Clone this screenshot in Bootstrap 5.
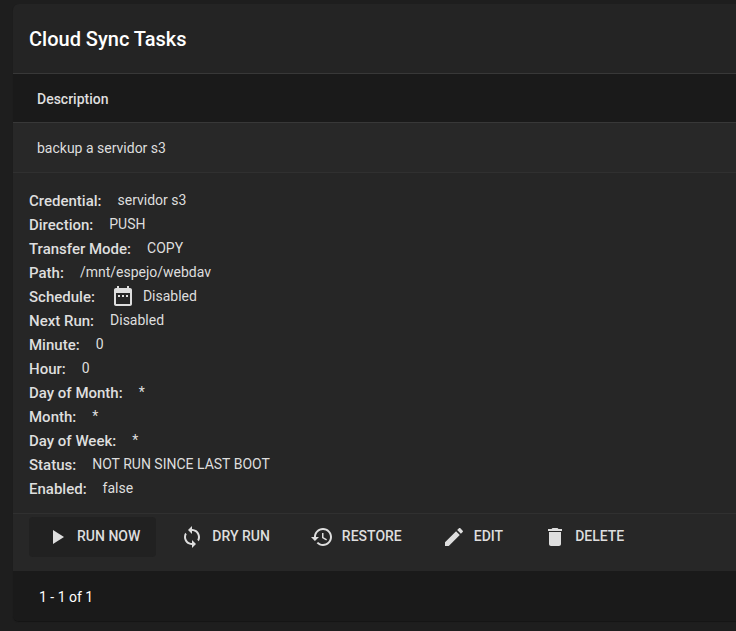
<!DOCTYPE html>
<html lang="en" data-bs-theme="dark">
<head>
<meta charset="utf-8">
<meta name="viewport" content="width=device-width, initial-scale=1">
<title>Cloud Sync Tasks</title>
<link href="https://cdn.jsdelivr.net/npm/bootstrap@5.3.0/dist/css/bootstrap.min.css" rel="stylesheet">
<style>
body { background: #1e1e1e; color: #dedede; font: 400 14px/24px Roboto, "Liberation Sans", sans-serif; }
.task-card { margin: 4px 0 8px 13px; background: #242424; border-radius: 6px 0 0 6px; box-shadow: 0 1px 1px #141414; }
.task-title { color: #fff; font-size: 20px; font-weight: 500; line-height: 24px; padding: 23px 16px 22px; }
.task-table th, .task-table .task-name { border: 0 solid #383838; border-width: 1px 0; padding: 13px 24px 11px; }
.task-table th { background: #1a1a1a; font-weight: 500; }
.task-table .task-name { background: #282828; border-bottom-color: #303030; padding: 13px 24px 12px; }
.task-table .task-detail { background: #262626; padding: 0; }
.facts { padding: 16px 16px 12px; }
.facts dt { font-size: 15px; font-weight: 500; line-height: 24px; }
.facts dd { line-height: 22px; }
.task-actions { border-top: 1px solid #303030; background: #272727; padding: 3px 16px 14px; }
.act { color: #dedede; font-size: 14px; font-weight: 500; line-height: 22px; padding: 8px 16px; border: 0; border-radius: 4px; }
.act:hover, .act.is-focused { background: #212121; color: #dedede; }
.glyph { width: 24px; height: 24px; fill: currentColor; flex: none; }
.task-pager { background: #1a1a1a; color: #fff; padding: 14px 26px 12px; border-radius: 0 0 0 6px; }
</style>
<script defer src="https://cdn.jsdelivr.net/npm/bootstrap@5.3.0/dist/js/bootstrap.bundle.min.js"></script>
</head>
<body>
<main class="task-card">
  <h1 class="task-title m-0">Cloud Sync Tasks</h1>
  <table class="task-table w-100">
    <thead><tr><th scope="col">Description</th></tr></thead>
    <tbody>
      <tr><td class="task-name">backup a servidor s3</td></tr>
      <tr><td class="task-detail">
        <dl class="facts m-0">
          <div class="d-flex gap-3"><dt>Credential:</dt><dd class="m-0">servidor s3</dd></div>
          <div class="d-flex gap-3"><dt>Direction:</dt><dd class="m-0">PUSH</dd></div>
          <div class="d-flex gap-3"><dt>Transfer Mode:</dt><dd class="m-0">COPY</dd></div>
          <div class="d-flex gap-3"><dt>Path:</dt><dd class="m-0">/mnt/espejo/webdav</dd></div>
          <div class="d-flex gap-3"><dt>Schedule:</dt><dd class="m-0 d-flex gap-2"><svg class="glyph" viewBox="0 1 24 24" aria-hidden="true"><path d="M9 11H7v2h2v-2zm4 0h-2v2h2v-2zm4 0h-2v2h2v-2zm2-7h-1V2h-2v2H8V2H6v2H5c-1.11 0-1.99.9-1.99 2L3 20c0 1.1.89 2 2 2h14c1.1 0 2-.9 2-2V6c0-1.1-.9-2-2-2zm0 16H5V9h14v11z"/></svg>Disabled</dd></div>
          <div class="d-flex gap-3"><dt>Next Run:</dt><dd class="m-0">Disabled</dd></div>
          <div class="d-flex gap-3"><dt>Minute:</dt><dd class="m-0">0</dd></div>
          <div class="d-flex gap-3"><dt>Hour:</dt><dd class="m-0">0</dd></div>
          <div class="d-flex gap-3"><dt>Day of Month:</dt><dd class="m-0">*</dd></div>
          <div class="d-flex gap-3"><dt>Month:</dt><dd class="m-0">*</dd></div>
          <div class="d-flex gap-3"><dt>Day of Week:</dt><dd class="m-0">*</dd></div>
          <div class="d-flex gap-3"><dt>Status:</dt><dd class="m-0">NOT RUN SINCE LAST BOOT</dd></div>
          <div class="d-flex gap-3"><dt>Enabled:</dt><dd class="m-0">false</dd></div>
        </dl>
        <div class="task-actions d-flex flex-wrap gap-2">
          <button type="button" class="btn act is-focused d-flex gap-2"><svg class="glyph" viewBox="0 0 24 24" aria-hidden="true"><path d="M8 5v14l11-7z"/></svg>RUN NOW</button>
          <button type="button" class="btn act d-flex gap-2"><svg class="glyph" viewBox="0 0 24 24" aria-hidden="true"><path d="M12 4V1L8 5l4 4V6c3.31 0 6 2.69 6 6 0 1.01-.25 1.97-.7 2.8l1.46 1.46C19.54 15.03 20 13.57 20 12c0-4.42-3.58-8-8-8zm0 14c-3.31 0-6-2.69-6-6 0-1.01.25-1.97.7-2.8L5.24 7.74C4.46 8.97 4 10.43 4 12c0 4.42 3.58 8 8 8v3l4-4-4-4v3z"/></svg>DRY RUN</button>
          <button type="button" class="btn act d-flex gap-2"><svg class="glyph" viewBox="0 0 24 24" aria-hidden="true"><path d="M13 3c-4.97 0-9 4.03-9 9H1l3.89 3.89.07.14L9 12H6c0-3.87 3.13-7 7-7s7 3.13 7 7-3.13 7-7 7c-1.93 0-3.68-.79-4.94-2.06l-1.42 1.42C8.27 19.99 10.51 21 13 21c4.97 0 9-4.03 9-9s-4.03-9-9-9zm-1 5v5l4.28 2.54.72-1.21-3.5-2.08V8H12z"/></svg>RESTORE</button>
          <button type="button" class="btn act d-flex gap-2"><svg class="glyph" viewBox="0 0 24 24" aria-hidden="true"><path d="M3 17.25V21h3.75L17.81 9.94l-3.75-3.75L3 17.25zM20.71 7.04c.39-.39.39-1.02 0-1.41l-2.34-2.34c-.39-.39-1.02-.39-1.41 0l-1.83 1.83 3.75 3.75 1.83-1.83z"/></svg>EDIT</button>
          <button type="button" class="btn act d-flex gap-2"><svg class="glyph" viewBox="0 0 24 24" aria-hidden="true"><path d="M6 19c0 1.1.9 2 2 2h8c1.1 0 2-.9 2-2V7H6v12zM19 4h-3.5l-1-1h-5l-1 1H5v2h14V4z"/></svg>DELETE</button>
        </div>
      </td></tr>
    </tbody>
  </table>
  <div class="task-pager">1 - 1 of 1</div>
</main>
</body>
</html>
